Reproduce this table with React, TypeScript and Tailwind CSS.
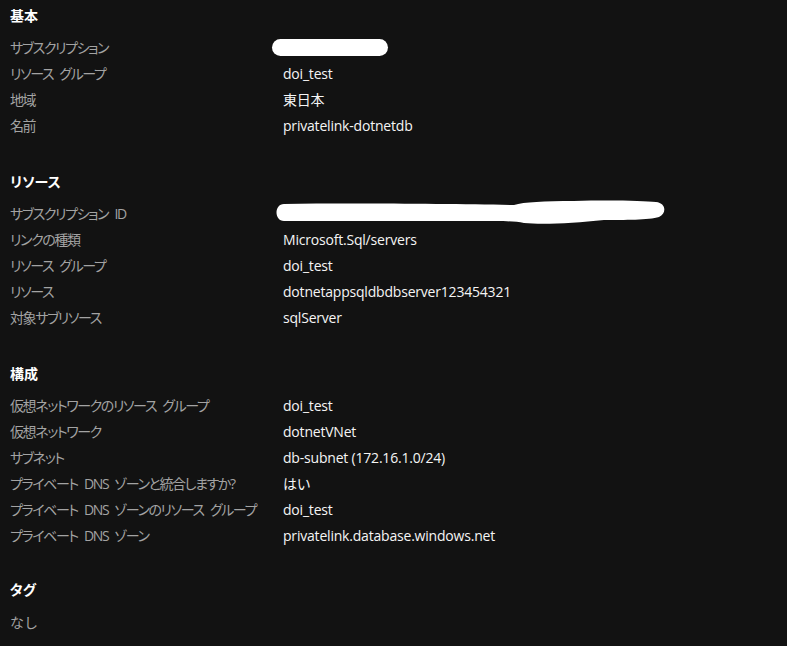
import React from "react";

type Row = { label: string; value: React.ReactNode };

const Blob1 = () => (
  <svg width="118" height="20" viewBox="0 0 118 20" className="-ml-[12px] block">
    <rect x="1" y="2" width="116" height="17" rx="8.5" fill="#ffffff" />
  </svg>
);

const Blob2 = () => (
  <svg width="394" height="28" viewBox="0 0 394 28" className="-ml-[9px] block">
    <path
      d="M10 5 C 80 4, 180 5, 240 6 C 250 3, 270 2, 300 2 C 340 1, 370 2, 382 3 C 392 4, 393 14, 385 18 C 375 21, 350 21, 330 21 C 300 24, 270 26, 250 24 C 240 22, 230 22, 200 22 L 10 22 C 0 22, 0 5, 10 5 Z"
      fill="#ffffff"
    />
  </svg>
);

const sections: { title: string; rows: Row[] }[] = [
  {
    title: "基本",
    rows: [
      { label: "サブスクリプション", value: <Blob1 /> },
      { label: "リソース グループ", value: "doi_test" },
      { label: "地域", value: "東日本" },
      { label: "名前", value: "privatelink-dotnetdb" },
    ],
  },
  {
    title: "リソース",
    rows: [
      { label: "サブスクリプション ID", value: <Blob2 /> },
      { label: "リンクの種類", value: "Microsoft.Sql/servers" },
      { label: "リソース グループ", value: "doi_test" },
      { label: "リソース", value: "dotnetappsqldbdbserver123454321" },
      { label: "対象サブリソース", value: "sqlServer" },
    ],
  },
  {
    title: "構成",
    rows: [
      { label: "仮想ネットワークのリソース グループ", value: "doi_test" },
      { label: "仮想ネットワーク", value: "dotnetVNet" },
      { label: "サブネット", value: "db-subnet (172.16.1.0/24)" },
      { label: "プライベート DNS ゾーンと統合しますか?", value: "はい" },
      { label: "プライベート DNS ゾーンのリソース グループ", value: "doi_test" },
      { label: "プライベート DNS ゾーン", value: "privatelink.database.windows.net" },
    ],
  },
];

export default function App() {
  return (
    <div
      className="w-[787px] h-[646px] overflow-hidden bg-[#121212] px-[10px] pt-[6px] text-[14px]"
      style={{ fontFamily: '"Open Sans", "Noto Sans CJK JP", sans-serif' }}
    >
      {sections.map((s) => (
        <div key={s.title} className="mb-[34px]">
          <div className="h-[20px] leading-[20px] font-bold text-white [font-feature-settings:'palt']">{s.title}</div>
          <div className="mt-[8px] flex flex-col">
            {s.rows.map((r, i) => (
              <div key={i} className="flex h-[26px] items-center">
                <div className="w-[273px] shrink-0 whitespace-nowrap text-[#a3a3a3] tracking-[-1.4px] [word-spacing:4px] [font-feature-settings:'palt']">
                  {r.label}
                </div>
                <div className="whitespace-nowrap text-[#f5f5f5] tracking-[-0.2px]">{r.value}</div>
              </div>
            ))}
          </div>
        </div>
      ))}
      <div className="-mt-[2px]">
        <div className="h-[20px] leading-[20px] font-bold text-white [font-feature-settings:'palt']">タグ</div>
        <div className="mt-[9px] h-[26px] flex items-center text-[#a3a3a3]">なし</div>
      </div>
    </div>
  );
}
